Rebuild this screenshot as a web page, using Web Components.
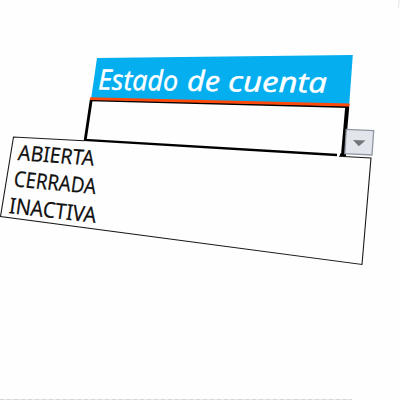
<!DOCTYPE html>
<html lang="es">
<head>
<meta charset="utf-8">
<title>Estado de cuenta</title>
<style>
html,body{margin:0;width:400px;height:400px;overflow:hidden;background:#fefefe}
</style>
</head>
<body>
<sheet-view>
  <cell-field slot="cell"></cell-field>
  <header-cell slot="cell">Estado de cuenta</header-cell>
  <option-list slot="cell">
    <list-option style="--m:matrix(1,.075,-.15,1,17.3,160)" width="76" size="21">ABIERTA</list-option>
    <list-option style="--m:matrix(1,.095,-.14,1,13,186.3)" width="82" size="21.5">CERRADA</list-option>
    <list-option style="--m:matrix(1,.115,-.14,1,8.3,213)" width="87" size="21.5">INACTIVA</list-option>
  </option-list>
  <drop-button slot="cell"></drop-button>
</sheet-view>
<script>
const base = `<style>
:host{position:absolute;inset:0;display:block}
svg{display:block;width:400px;height:400px;overflow:visible}
</style>`;
const define = (name, markup, setup) => customElements.define(name, class extends HTMLElement {
  connectedCallback() {
    if (this.shadowRoot) return;
    this.attachShadow({mode: 'open'}).innerHTML = base + markup;
    if (setup) setup(this, this.shadowRoot);
  }
});

define('sheet-view', `<style>:host{position:relative;width:400px;height:400px;background:#fefefe}</style>
<svg viewBox="0 0 400 400">
  <path d="M0 399.5H352" stroke="#e9e9e9" fill="none"/>
  <path d="M0 399.5H352" stroke="#d6d6d6" stroke-dasharray="4 3" fill="none"/>
  <path d="M399.2 0L398.5 8" stroke="#e4e4e4" fill="none"/>
</svg><slot name="cell"></slot>`);

define('header-cell', `<svg viewBox="0 0 400 400">
  <path d="M97 58L352.8 55L349.2 105L91 99.5Z" fill="#04aeef"/>
  <path d="M90 98.7L349.6 105" stroke="#ff4a0c" stroke-width="2.8" fill="none"/>
  <text transform="matrix(1,.013,0,1,0,88.3)" fill="#fff" stroke="#fff" stroke-width=".5" font-family="'Open Sans','Noto Sans',sans-serif" font-style="italic" font-weight="500" font-size="28"></text>
</svg>`, (el, root) => {
  // Start and width of each word in the heading.
  const spans = [[98, 80], [187, 33], [228, 99]];
  const text = root.querySelector('text');
  el.textContent.split(' ').forEach((word, i) => {
    const span = document.createElementNS('http://www.w3.org/2000/svg', 'tspan');
    span.textContent = word;
    span.setAttribute('x', spans[i][0]);
    span.setAttribute('textLength', spans[i][1]);
    span.setAttribute('lengthAdjust', 'spacingAndGlyphs');
    if (i) text.append(' ');
    text.append(span);
  });
});

define('cell-field', `<svg viewBox="0 0 400 400" fill="none" stroke="#000">
  <path d="M90 100.3L349 107" stroke-width="2"/>
  <path d="M91.2 100L85.2 140" stroke-width="2.8"/>
  <path d="M347.2 107L343 155" stroke-width="4"/>
</svg>`);

define('option-list', `<svg viewBox="0 0 400 400">
  <path d="M13.5 137L84 140.8L371 158L362 264.5L.5 216.5Z" fill="#fefefe"/>
  <path d="M84 140.8L13.5 137L.5 216.5L362 264.5L371 158L339 156.3" fill="none" stroke="#181818" stroke-width="1.1"/>
  <path d="M84 139.8L337 155" fill="none" stroke="#000" stroke-width="2.3"/>
  <path d="M340 154.8L346 155.2" fill="none" stroke="#000" stroke-width="2.6"/>
</svg><slot></slot>`);

define('list-option', `<svg viewBox="0 0 400 400">
  <text style="transform:var(--m)" lengthAdjust="spacingAndGlyphs" fill="#111" stroke="#111" stroke-width=".2" font-family="'Noto Sans','Open Sans',sans-serif"></text>
</svg>`, (el, root) => {
  const t = root.querySelector('text');
  t.textContent = el.textContent;
  t.setAttribute('textLength', el.getAttribute('width'));
  t.setAttribute('font-size', el.getAttribute('size'));
});

define('drop-button', `<svg viewBox="0 0 400 400">
  <path d="M346.3 129.4L373.7 130.5L372 155L344.8 153.6Z" fill="#e2e5ec" stroke="#9197a1" stroke-width="1.3"/>
  <path d="M353 140L365.5 140.4L358.8 146.3Z" fill="#74767a"/>
</svg>`);
</script>
</body>
</html>
